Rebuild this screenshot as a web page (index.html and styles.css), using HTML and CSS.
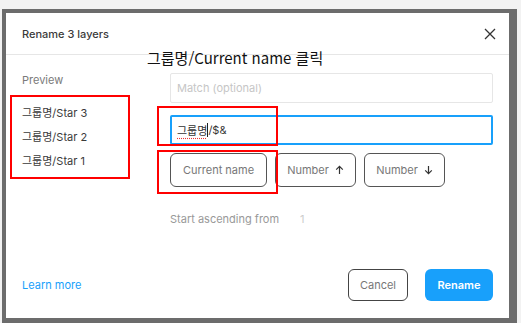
FILE: index.html
```html
<!DOCTYPE html>
<html lang="ko">
  <head>
    <meta charset="utf-8" />
    <title>Rename 3 layers</title>
    <link rel="stylesheet" href="styles.css">
  </head>
  <body>
    <div class="frame">
      <div class="dialog">
        <div class="dialog-header">
          <span class="dialog-title">Rename 3 layers</span>
          <svg class="close-icon" width="14" height="14" viewBox="0 0 14 14">
            <path d="M2 2 L12 12 M12 2 L2 12" stroke="#333" stroke-width="1.3" fill="none" />
          </svg>
        </div>
        <div class="dialog-body">
          <div class="preview">
            <div class="preview-label">Preview</div>
            <div class="preview-item">그룹명/Star 3</div>
            <div class="preview-item">그룹명/Star 2</div>
            <div class="preview-item">그룹명/Star 1</div>
          </div>
          <div class="fields">
            <div class="field field-empty">Match (optional)</div>
            <div class="field field-active"><span class="misspelled">그룹명</span><span class="caret"></span>/$&amp;</div>
            <div class="token-row">
              <div class="token token-current">Current name</div>
              <div class="token">Number
                <svg width="9" height="10" viewBox="0 0 9 10"><path d="M4.5 9 V1.5 M1.2 4.6 L4.5 1.3 L7.8 4.6" stroke="#333" stroke-width="1.2" fill="none" /></svg>
              </div>
              <div class="token">Number
                <svg width="9" height="10" viewBox="0 0 9 10"><path d="M4.5 1 V8.5 M1.2 5.4 L4.5 8.7 L7.8 5.4" stroke="#333" stroke-width="1.2" fill="none" /></svg>
              </div>
            </div>
            <div class="start-row">
              <span class="start-label">Start ascending from</span>
              <span class="start-value">1</span>
            </div>
          </div>
        </div>
        <div class="dialog-footer">
          <span class="learn-more">Learn more</span>
          <div class="actions">
            <div class="btn btn-cancel">Cancel</div>
            <div class="btn btn-primary">Rename</div>
          </div>
        </div>
      </div>
    </div>

    <div class="note">그룹명/Current name 클릭</div>
    <div class="mark mark-preview"></div>
    <div class="mark mark-input"></div>
    <div class="mark mark-token"></div>
  </body>
</html>
```

FILE: styles.css
```css
* {
  margin: 0;
  padding: 0;
  box-sizing: border-box;
}
body {
  font-family: "Inter", "Noto Sans CJK KR", sans-serif;
  font-size: 11px;
  color: #333;
  background: #f2f2f2;
  padding: 9px 0 0 2px;
  height: 323px;
  overflow: hidden;
  position: relative;
}
.frame {
  width: 515px;
  border-style: solid;
  border-color: #6c6c6c;
  border-width: 4px 8px 6px 4px;
  background: #fff;
}
.dialog {
  height: 305px;
  display: flex;
  flex-direction: column;
}
.dialog-header {
  height: 42px;
  border-bottom: 1px solid #e6e6e6;
  display: flex;
  align-items: center;
  justify-content: space-between;
  padding: 0 12px 0 16px;
}
.dialog-title {
  font-weight: 500;
  font-size: 11px;
  color: #3a3a3a;
}
.close-icon {
  display: block;
}
.dialog-body {
  display: flex;
  flex: 1;
}
.preview {
  width: 164px;
  padding: 17px 0 0 16px;
}
.preview-label {
  line-height: 16px;
  color: #7a7a7a;
  margin-bottom: 17px;
}
.preview-item {
  line-height: 16px;
  margin-bottom: 8px;
  color: #3a3a3a;
}
.fields {
  width: 323px;
  padding-top: 18px;
}
.field {
  height: 30px;
  border: 1px solid #e6e6e6;
  border-radius: 2px;
  padding: 0 6px;
  display: flex;
  align-items: center;
}
.field-empty {
  color: #c6c6c6;
  margin-bottom: 12px;
}
.field-active {
  border: 2px solid #18a0fb;
  padding: 0 5px;
  color: #333;
}
.misspelled {
  text-decoration: underline dotted #e33;
  text-underline-offset: 3px;
}
.caret {
  display: inline-block;
  width: 1px;
  height: 14px;
  background: #222;
}
.token-row {
  display: flex;
  gap: 8px;
  margin-top: 8px;
}
.token {
  height: 34px;
  border: 1px solid #555;
  border-radius: 6px;
  color: #777;
  display: flex;
  align-items: center;
  justify-content: center;
  gap: 6px;
  width: 81px;
}
.token-current {
  width: 97px;
}
.start-row {
  margin-top: 24px;
  line-height: 16px;
  display: flex;
  gap: 21px;
}
.start-label {
  color: #999;
}
.start-value {
  color: #ccc;
}
.dialog-footer {
  display: flex;
  align-items: center;
  justify-content: space-between;
  padding: 0 16px 17px 16px;
}
.learn-more {
  color: #18a0fb;
}
.actions {
  display: flex;
  gap: 17px;
}
.btn {
  height: 32px;
  border-radius: 6px;
  display: flex;
  align-items: center;
  justify-content: center;
}
.btn-cancel {
  width: 60px;
  border: 1px solid #444;
  color: #777;
}
.btn-primary {
  width: 68px;
  background: #18a0fb;
  color: #fff;
  font-weight: 600;
}
.note {
  position: absolute;
  left: 147px;
  top: 48px;
  font-family: "Noto Sans CJK KR", sans-serif;
  font-size: 15px;
  line-height: 20px;
  color: #111;
}
.mark {
  position: absolute;
  border: 2px solid #f00;
}
.mark-preview {
  left: 10px;
  top: 95px;
  width: 120px;
  height: 84px;
}
.mark-input {
  left: 157px;
  top: 106px;
  width: 121px;
  height: 40px;
}
.mark-token {
  left: 157px;
  top: 150px;
  width: 121px;
  height: 44px;
}
```
